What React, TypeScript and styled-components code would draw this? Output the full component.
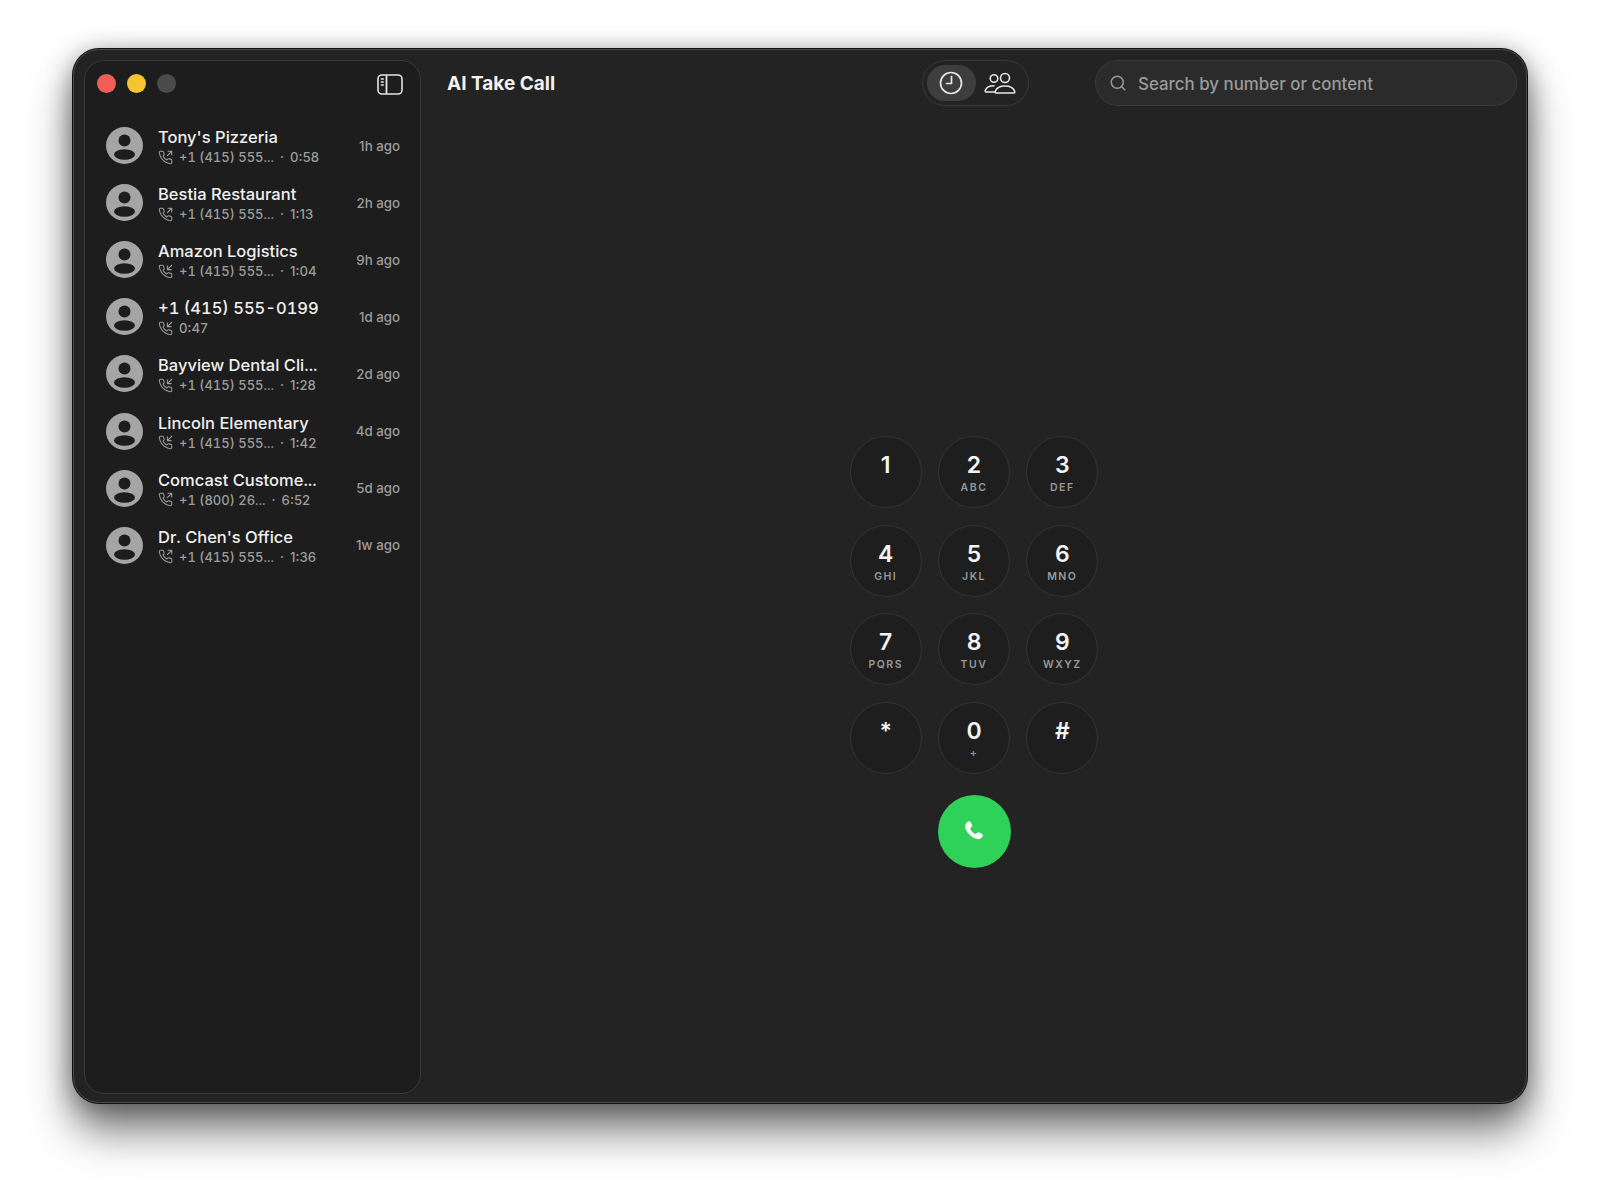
import React from "react";
import styled, { createGlobalStyle } from "styled-components";
import { Search } from "lucide-react";

const calls = [
  { name: "Tony's Pizzeria", number: "+1 (415) 555...", length: "0:58", ago: "1h ago", out: true },
  { name: "Bestia Restaurant", number: "+1 (415) 555...", length: "1:13", ago: "2h ago", out: true },
  { name: "Amazon Logistics", number: "+1 (415) 555...", length: "1:04", ago: "9h ago", out: false },
  { name: "+1 (415) 555-0199", number: "", length: "0:47", ago: "1d ago", out: false },
  { name: "Bayview Dental Cli...", number: "+1 (415) 555...", length: "1:28", ago: "2d ago", out: false },
  { name: "Lincoln Elementary", number: "+1 (415) 555...", length: "1:42", ago: "4d ago", out: false },
  { name: "Comcast Custome...", number: "+1 (800) 26...", length: "6:52", ago: "5d ago", out: true },
  { name: "Dr. Chen's Office", number: "+1 (415) 555...", length: "1:36", ago: "1w ago", out: true },
];

const keys = [
  ["1", ""],
  ["2", "ABC"],
  ["3", "DEF"],
  ["4", "GHI"],
  ["5", "JKL"],
  ["6", "MNO"],
  ["7", "PQRS"],
  ["8", "TUV"],
  ["9", "WXYZ"],
  ["*", ""],
  ["0", "+"],
  ["#", ""],
];

const PhoneGlyph = ({ out }: { out: boolean }) => (
  <svg width="15" height="15" viewBox="0 0 24 24" fill="none" stroke="#9c9c9c" strokeWidth="1.7" strokeLinecap="round" strokeLinejoin="round">
    <path d="M22 16.9v3a2 2 0 0 1-2.2 2 19.8 19.8 0 0 1-8.6-3.1 19.5 19.5 0 0 1-6-6 19.8 19.8 0 0 1-3.1-8.7A2 2 0 0 1 4.1 2h3a2 2 0 0 1 2 1.7c.1 1 .4 1.9.7 2.8a2 2 0 0 1-.5 2.1L8.1 9.9a16 16 0 0 0 6 6l1.3-1.3a2 2 0 0 1 2.1-.4c.9.3 1.8.6 2.8.7a2 2 0 0 1 1.7 2z" />
    {out ? <path d="M16 2h6v6M22 2l-7 7" /> : <path d="M22 2l-7 7M15 3v6h6" />}
  </svg>
);

const Avatar = () => (
  <AvatarDisc viewBox="0 0 37 37">
    <circle cx="18.5" cy="18.5" r="18.5" fill="#a5a5a5" />
    <circle cx="18.5" cy="13.5" r="6" fill="#1d1d1d" />
    <ellipse cx="18.5" cy="27.5" rx="10.5" ry="5.2" fill="#1d1d1d" />
  </AvatarDisc>
);

const App = () => {
  return (
    <Stage>
      <GlobalStyle />
      <Window>
        <Sidebar>
          <SideTop>
            <Lights>
              <Light color="#f25d58" />
              <Light color="#f6c42f" />
              <Light color="#4a4b4a" />
            </Lights>
            <PaneIcon width="26" height="21" viewBox="0 0 26 21" fill="none" stroke="#e4e4e4" strokeWidth="1.6">
              <rect x="1" y="1" width="24" height="19" rx="4" />
              <path d="M9.500 1v19" strokeWidth="1.8" />
              <path d="M3.800 5h3M3.800 8h3M3.800 11h3" strokeWidth="1.4" />
            </PaneIcon>
          </SideTop>
          <CallList>
            {calls.map((c) => (
              <CallRow key={c.name}>
                <Avatar />
                <CallText>
                  <CallName>{c.name}</CallName>
                  <CallMeta>
                    <PhoneGlyph out={c.out} />
                    {c.number ? (
                      <span>
                        <CallNumber>{c.number}</CallNumber>
                        <Dot>·</Dot>
                        {c.length}
                      </span>
                    ) : (
                      <span>{c.length}</span>
                    )}
                  </CallMeta>
                </CallText>
                <CallAgo>{c.ago}</CallAgo>
              </CallRow>
            ))}
          </CallList>
        </Sidebar>
        <Main>
          <Header>
            <Title>AI Take Call</Title>
            <Toggle>
              <ToggleItem $active>
                <svg width="24" height="24" viewBox="0 0 24 24" fill="none" stroke="#e6e6e6" strokeWidth="1.7" strokeLinecap="round" strokeLinejoin="round">
                  <circle cx="12" cy="12" r="10.500" />
                  <path d="M12.500 5.500v7H7.500" />
                </svg>
              </ToggleItem>
              <ToggleItem>
                <svg width="32" height="24" viewBox="0 0 32 24" fill="none" stroke="#e6e6e6" strokeWidth="1.6" strokeLinecap="round" strokeLinejoin="round">
                  <circle cx="10" cy="7.500" r="3.800" />
                  <circle cx="21" cy="7" r="4.500" />
                  <path d="M10.500 21H2.500c-1 0-1.500-.8-1.200-1.600C2.300 16.500 5 14.800 10 14.800" />
                  <path d="M12 22h17.500c1 0 1.600-.8 1.200-1.800-1.200-3.300-4.700-5.200-9.700-5.200s-8.500 1.900-9.700 5.200c-.4 1 .2 1.800 1.200 1.800z" />
                </svg>
              </ToggleItem>
            </Toggle>
            <SearchBox>
              <Search size={18} color="#9a9a9a" strokeWidth={2} />
              <SearchInput placeholder="Search by number or content" readOnly />
            </SearchBox>
          </Header>
          <Dialer>
            <KeyGrid>
              {keys.map(([digit, letters]) => (
                <Key key={digit}>
                  <Digit>{digit}</Digit>
                  <Letters>{letters}</Letters>
                </Key>
              ))}
            </KeyGrid>
            <CallButton>
              <svg width="24" height="24" viewBox="0 0 24 24" fill="#fff">
                <path d="M6.200 2.500c.8-.5 1.800-.3 2.300.5l1.500 2.700c.4.800.3 1.700-.4 2.300l-1.100 1c-.3.300-.4.700-.2 1.100.9 1.900 2.700 3.800 4.700 4.900.4.200.8.100 1.100-.2l1.100-1c.6-.6 1.500-.7 2.200-.3l2.600 1.500c.9.500 1.100 1.600.5 2.400-1.200 1.700-2.900 3-5 2.700-3.200-.5-6.100-2.500-8.300-4.900C4.500 12.800 3 9.900 3.100 7c.1-1.900 1.600-3.500 3.100-4.500z" />
              </svg>
            </CallButton>
          </Dialer>
        </Main>
      </Window>
    </Stage>
  );
};

export default App;

const GlobalStyle = createGlobalStyle`
  body {
    margin: 0;
    background: #fff;
    font-family: Inter, "Liberation Sans", sans-serif;
  }
`;

const Stage = styled.div`
  width: 1600px;
  height: 1200px;
  padding: 49px 73px 97px 73px;
  box-sizing: border-box;
  overflow: hidden;
`;

const Window = styled.div`
  height: 100%;
  box-sizing: border-box;
  display: flex;
  padding: 10px 10px 8px 10px;
  background: #222322;
  border-radius: 26px;
  border: 1px solid #4a4b4a;
  box-shadow: 0 0 0 1px #111, 0 28px 44px rgba(0, 0, 0, 0.52), 0 4px 26px rgba(0, 0, 0, 0.38);
`;

const Sidebar = styled.div`
  width: 337px;
  flex-shrink: 0;
  box-sizing: border-box;
  background: #1c1d1c;
  border: 1px solid #383938;
  border-radius: 20px;
  padding-top: 12px;
`;

const SideTop = styled.div`
  display: flex;
  align-items: center;
  justify-content: space-between;
  height: 20px;
  padding: 0 17px 0 12px;
`;

const PaneIcon = styled.svg`
  margin-top: 2px;
`;

const Lights = styled.div`
  display: flex;
  gap: 11px;
`;

const Light = styled.div<{ color: string }>`
  width: 19px;
  height: 19px;
  border-radius: 50%;
  background: ${(p) => p.color};
`;

const CallList = styled.div`
  margin-top: 24px;
  padding: 0 20px 0 21px;
`;

const CallRow = styled.div`
  display: flex;
  align-items: center;
  height: 57.100px;
`;

const AvatarDisc = styled.svg`
  width: 37px;
  height: 37px;
  flex-shrink: 0;
  margin-right: 15px;
`;

const CallText = styled.div`
  flex: 1;
  min-width: 0;
`;

const CallName = styled.div`
  padding-top: 1px;
  font-size: 16.500px;
  font-weight: 500;
  font-variant-numeric: tabular-nums;
  line-height: 22px;
  color: #f0f0f0;
  white-space: nowrap;
`;

const CallMeta = styled.div`
  display: flex;
  align-items: center;
  gap: 6px;
  font-size: 13.200px;
  font-weight: 500;
  line-height: 18px;
  color: #9c9c9c;
  white-space: nowrap;
`;

const CallNumber = styled.span`
  font-size: 13px;
  font-variant-numeric: tabular-nums;
`;

const Dot = styled.span`
  margin: 0 6px;
`;

const CallAgo = styled.div`
  font-size: 13.300px;
  font-weight: 500;
  color: #9c9c9c;
  white-space: nowrap;
`;

const Main = styled.div`
  flex: 1;
  min-width: 0;
  display: flex;
  flex-direction: column;
`;

const Header = styled.div`
  display: flex;
  align-items: center;
  height: 46px;
  padding: 0 0 0 26px;
`;

const Title = styled.div`
  font-size: 19px;
  font-weight: 700;
  color: #f2f2f2;
  width: 475px;
  flex-shrink: 0;
`;

const Toggle = styled.div`
  display: flex;
  align-items: center;
  width: 107px;
  height: 46px;
  box-sizing: border-box;
  padding: 0 4px;
  border: 1px solid #373837;
  border-radius: 23px;
  margin-right: 66px;
  flex-shrink: 0;
`;

const ToggleItem = styled.div<{ $active?: boolean }>`
  flex: 1;
  height: 36px;
  border-radius: 18px;
  display: flex;
  align-items: center;
  justify-content: center;
  background: ${(p) => (p.$active ? "#3d3e3d" : "transparent")};
`;

const SearchBox = styled.div`
  width: 422px;
  height: 46px;
  box-sizing: border-box;
  display: flex;
  align-items: center;
  gap: 9px;
  padding: 0 13px;
  background: #2a2b2a;
  border: 1px solid #393a39;
  border-radius: 23px;
  flex-shrink: 0;
`;

const SearchInput = styled.input`
  flex: 1;
  border: none;
  outline: none;
  background: transparent;
  font-family: inherit;
  font-size: 16.900px;
  font-weight: 500;
  color: #9a9a9a;
  padding: 2px 2px 0;

  &::placeholder {
    color: #9a9a9a;
    opacity: 1;
  }
`;

const Dialer = styled.div`
  display: flex;
  flex-direction: column;
  align-items: center;
  margin-top: 330px;
  padding-left: 11px;
`;

const KeyGrid = styled.div`
  display: grid;
  grid-template-columns: repeat(3, 72px);
  grid-auto-rows: 72px;
  gap: 16.600px 16.300px;
`;

const Key = styled.div`
  box-sizing: border-box;
  border-radius: 50%;
  background: #1d1e1d;
  border: 1px solid #333433;
  display: flex;
  flex-direction: column;
  align-items: center;
  padding-top: 14px;
`;

const Digit = styled.div`
  font-size: 23px;
  font-weight: 600;
  line-height: 28px;
  color: #f4f4f4;
`;

const Letters = styled.div`
  font-size: 10.500px;
  font-weight: 600;
  letter-spacing: 1.500px;
  line-height: 14px;
  margin-top: 2px;
  color: #999;
`;

const CallButton = styled.div`
  width: 73px;
  height: 73px;
  margin-top: 21px;
  border-radius: 50%;
  background: #30d158;
  display: flex;
  align-items: center;
  justify-content: center;
`;
